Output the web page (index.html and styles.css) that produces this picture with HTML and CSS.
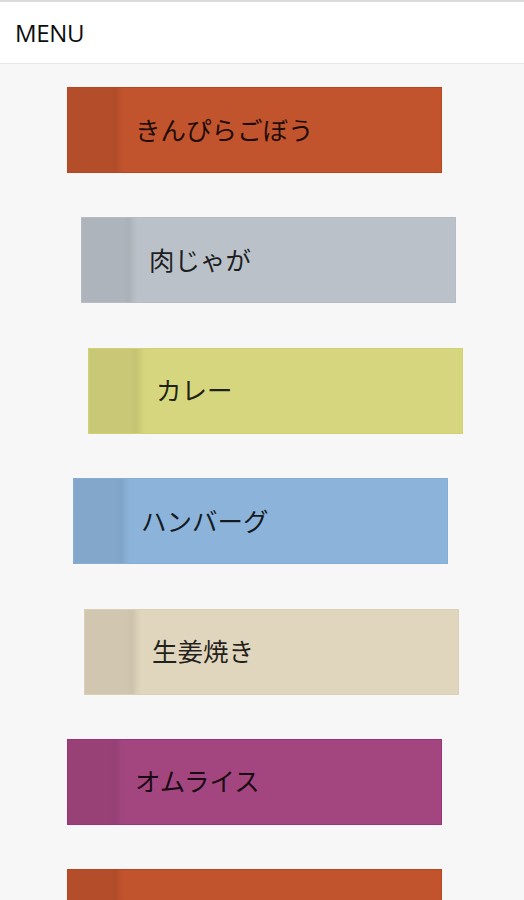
FILE: index.html
```html
<!DOCTYPE html>
<html lang="ja">
<head>
<meta charset="utf-8">
<title>MENU</title>
<link rel="stylesheet" href="styles.css">
</head>
<body>
<header class="topbar">
  <h1 class="title">MENU</h1>
</header>
<main class="list">
  <div class="card card-orange off-1">きんぴらごぼう</div>
  <div class="card card-gray off-2">肉じゃが</div>
  <div class="card card-yellow off-3">カレー</div>
  <div class="card card-blue off-4">ハンバーグ</div>
  <div class="card card-beige off-5">生姜焼き</div>
  <div class="card card-magenta off-1">オムライス</div>
  <div class="card card-orange off-1">きんぴらごぼう</div>
</main>
</body>
</html>
```

FILE: styles.css
```css
html, body {
  margin: 0;
  padding: 0;
}
body {
  background: #f7f7f7;
  font-family: "Noto Sans CJK JP", "Noto Sans", sans-serif;
  width: 524px;
  height: 900px;
  overflow: hidden;
}
.topbar {
  background: #ffffff;
  border-top: 2px solid #dcdcdc;
  border-bottom: 1px solid #e6e6e6;
  height: 61px;
  display: flex;
  align-items: center;
  padding-left: 15px;
}
.title {
  margin: 0 0 1px 0;
  font-family: "Open Sans", "Noto Sans", sans-serif;
  font-weight: 400;
  font-size: 24px;
  color: #0d0d0d;
  letter-spacing: -0.3px;
}
.list {
  display: flex;
  flex-direction: column;
  gap: 44.4px;
  padding-top: 23px;
}
.card {
  position: relative;
  box-sizing: border-box;
  width: 375px;
  height: 86px;
  flex: none;
  display: flex;
  align-items: center;
  padding-left: 67px;
  padding-bottom: 4px;
  font-size: 25.5px;
  color: rgba(0, 0, 0, 0.86);
  border: 1px solid transparent;
  background-image: linear-gradient(to right,
    rgba(0, 0, 0, 0.065) 0px,
    rgba(0, 0, 0, 0.065) 40px,
    rgba(0, 0, 0, 0.085) 47px,
    rgba(0, 0, 0, 0.03) 52px,
    rgba(0, 0, 0, 0) 56px);
}
.off-1 { margin-left: 67px; }
.off-2 { margin-left: 81px; }
.off-3 { margin-left: 88px; }
.off-4 { margin-left: 73px; }
.off-5 { margin-left: 84px; }

.card-orange {
  background-color: #c1532d;
  border-color: #b8471f;
}
.card-gray {
  background-color: #bac1c8;
  border-color: #b5bcc3;
}
.card-yellow {
  background-color: #d6d67e;
  border-color: #d0d075;
}
.card-blue {
  background-color: #8cb3d9;
  border-color: #85add5;
}
.card-beige {
  background-color: #e0d5bd;
  border-color: #dad0b6;
}
.card-magenta {
  background-color: #a3467f;
  border-color: #9c337a;
}
```
